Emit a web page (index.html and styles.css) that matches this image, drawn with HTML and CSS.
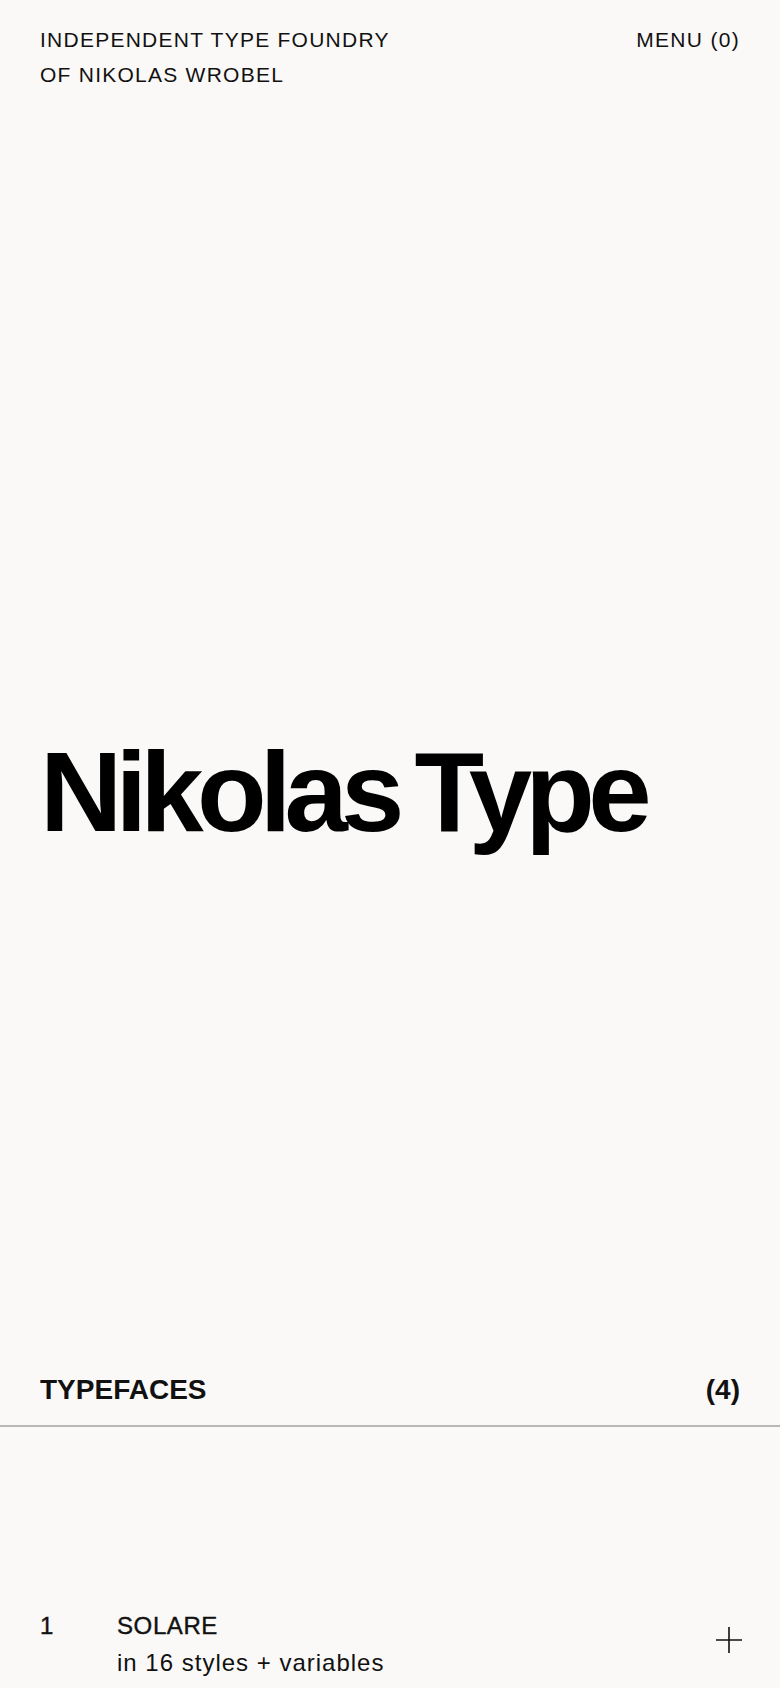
FILE: index.html
```html
<!DOCTYPE html>
<html lang="en">
<head>
  <meta charset="UTF-8" />
  <meta name="viewport" content="width=device-width, initial-scale=1.0"/>
  <title>Nikolas Type</title>
  <link rel="stylesheet" href="styles.css">
</head>
<body>
<header class="top">
  <div class="tagline">INDEPENDENT TYPE FOUNDRY<br>OF NIKOLAS WROBEL</div>
  <a class="menu" href="#">MENU (0)</a>
</header>

<section class="hero">
  <h1>Nikolas Type</h1>
</section>

<section class="typefaces">
  <div class="section-head">
    <h2>TYPEFACES</h2>
    <span class="count">(4)</span>
  </div>

  <div class="family">
    <span class="num">1</span>
    <div class="info">
      <div class="name">SOLARE</div>
      <div class="styles">in 16 styles + variables</div>
    </div>
    <svg class="plus" width="26" height="26" viewBox="0 0 26 26">
      <path d="M0 13H26M13 0V26" stroke="#111" stroke-width="1.6" fill="none"/>
    </svg>
  </div>
</section>
</body>
</html>
```

FILE: styles.css
```css
html, body {
  margin: 0;
  padding: 0;
  background: #faf9f7;
  color: #111;
  font-family: "Liberation Sans", Arial, sans-serif;
  overflow: hidden;
}

.top {
  display: flex;
  justify-content: space-between;
  align-items: flex-start;
  padding: 22px 40px 0;
  font-size: 21px;
  line-height: 35px;
  letter-spacing: 1.25px;
}

.menu {
  color: #111;
  text-decoration: none;
  letter-spacing: 1.3px;
}

.hero {
  padding: 643px 40px 526px;
}

.hero h1 {
  margin: 0;
  font-size: 114px;
  line-height: 113px;
  font-weight: bold;
  letter-spacing: -0.06em;
  word-spacing: -8px;
  color: #000;
}

.section-head {
  display: flex;
  justify-content: space-between;
  align-items: baseline;
  padding: 0 40px 19px;
  border-bottom: 2px solid #b9b8b6;
  font-size: 28px;
  line-height: 32px;
  font-weight: bold;
}

.section-head h2 {
  margin: 0;
  font-size: inherit;
  letter-spacing: 0;
}

.family {
  display: flex;
  align-items: flex-start;
  padding: 180px 38px 0 40px;
  font-size: 24px;
  line-height: 37px;
  letter-spacing: 1px;
}

.num {
  width: 77px;
  -webkit-text-stroke: 0.4px #111;
}

.name {
  letter-spacing: 0.6px;
  -webkit-text-stroke: 0.4px #111;
}

.plus {
  margin-left: auto;
  margin-top: 20px;
}
```
